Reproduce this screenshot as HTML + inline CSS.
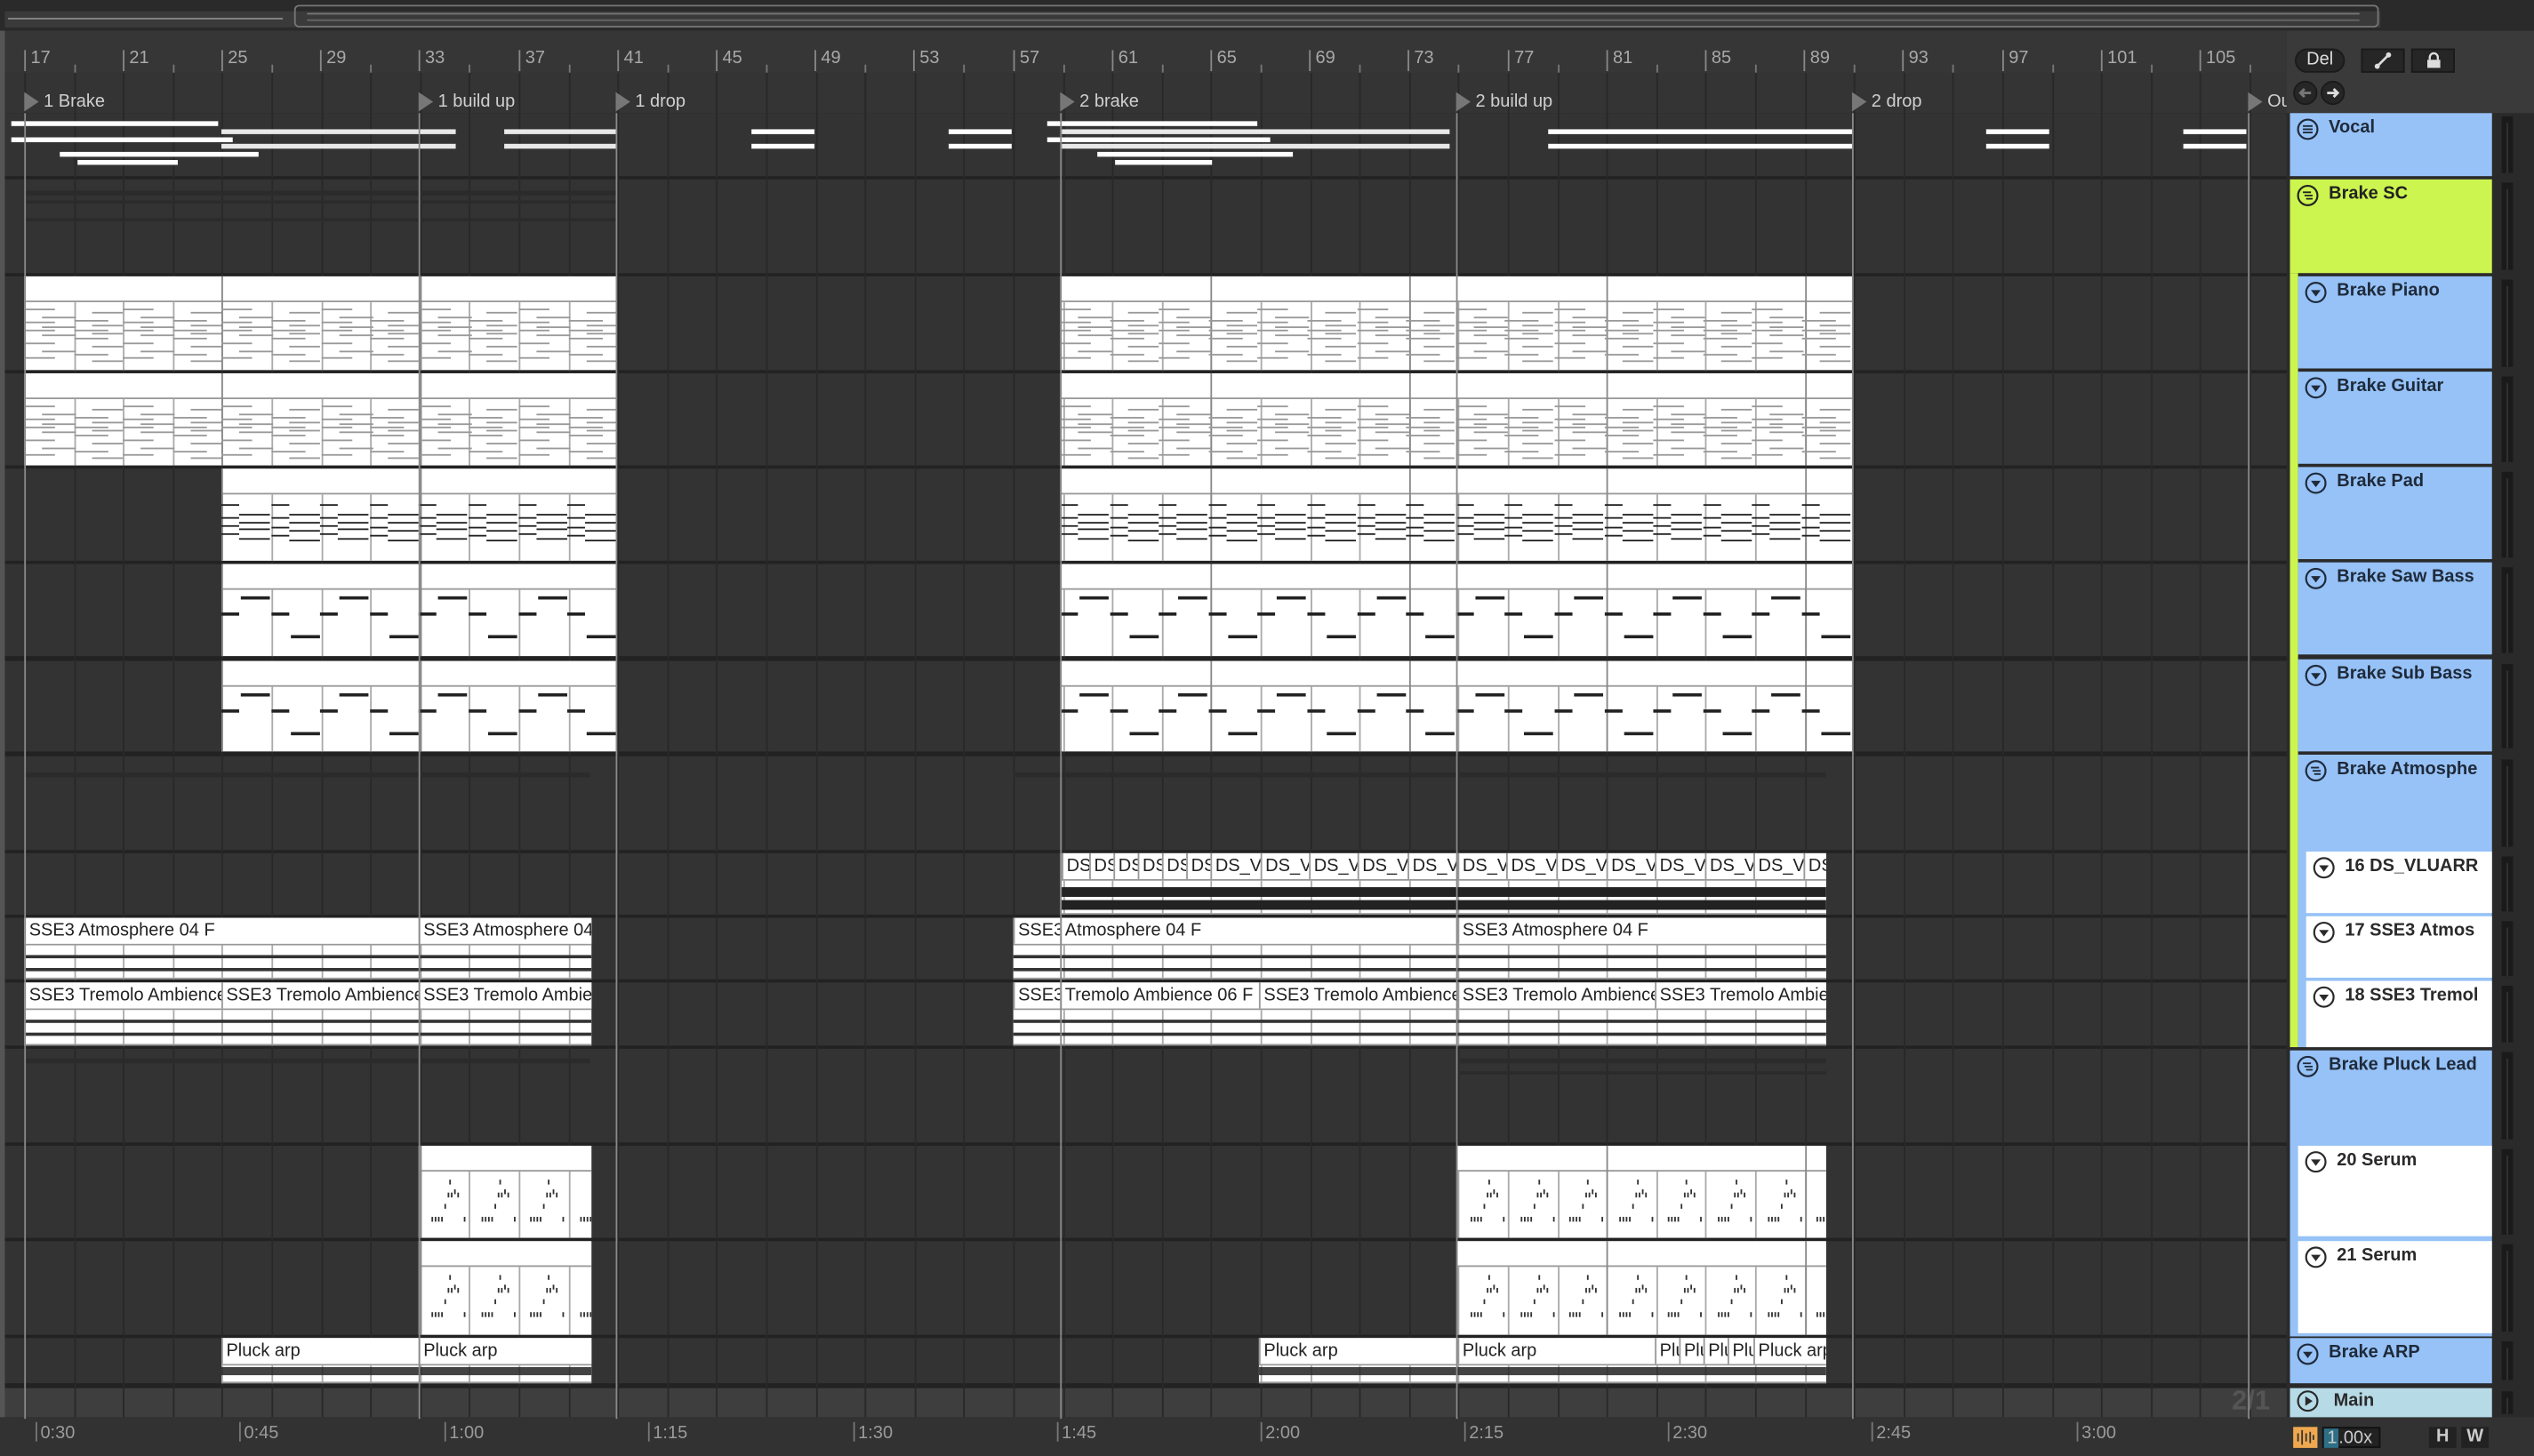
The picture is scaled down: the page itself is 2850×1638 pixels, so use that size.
<!DOCTYPE html>
<html><head><meta charset="utf-8">
<style>
html,body{margin:0;padding:0;background:#2b2b2b;overflow:hidden;width:2850px;height:1638px}
#w{position:absolute;left:0;top:0;width:1568px;height:901px;transform:scale(1.81760,1.81798);transform-origin:0 0;background:#323232;font-family:"Liberation Sans",sans-serif;overflow:hidden}
.a{position:absolute}
.rn{position:absolute;top:31px;font-size:11px;color:#a8a8a8;border-left:1px solid #888;padding-left:3px;height:13px;line-height:11px}
.loc{position:absolute;top:57px;font-size:11px;color:#cfcfcf;height:13px;line-height:13px;padding-left:12px;z-index:5}
.loc:before{content:"";position:absolute;left:0;top:0;border-left:9px solid #777;border-top:6px solid transparent;border-bottom:6px solid transparent}
.lbl{position:absolute;font-size:11px;color:#222;white-space:nowrap;overflow:hidden;line-height:16px;padding-left:2px;box-sizing:border-box;border-left:1px solid #999;background:#fff}
.hd{position:absolute;box-sizing:border-box;font-size:11px;font-weight:bold;color:#1f2a3a;white-space:nowrap;overflow:hidden}
.hd svg{position:absolute;left:4px;top:3px}
.hd span{position:absolute;left:24px;top:3px}
.tl{position:absolute;top:880px;font-size:11px;color:#9a9a9a;border-left:1px solid #777;padding-left:2px;height:12px;line-height:14px}
</style></head><body><div id="w">
<div class="a" style="left:0;top:0;width:1568px;height:19px;background:#2a2a2a"></div>
<div class="a" style="left:3px;top:7px;width:1470px;height:10px;background:#3a3a3a"></div>
<div class="a" style="left:182px;top:3px;width:1290px;height:14px;border:1px solid #777;border-radius:3px;box-sizing:border-box"></div>
<div class="a" style="left:5px;top:11px;width:170px;height:1px;background:#888"></div>
<div class="a" style="left:190px;top:8px;width:1270px;height:1px;background:#777"></div>
<div class="a" style="left:190px;top:12px;width:1270px;height:1px;background:#666"></div>
<div class="a" style="left:0;top:19px;width:1415px;height:26px;background:#363636"></div>
<div class="a" style="left:0;top:45px;width:1415px;height:25px;background:#343434"></div>
<div id="rul"></div>
<div class="rn" style="left:15px">17</div><div class="rn" style="left:76px">21</div><div class="rn" style="left:137px">25</div><div class="rn" style="left:198px">29</div><div class="rn" style="left:259px">33</div><div class="rn" style="left:321px">37</div><div class="rn" style="left:382px">41</div><div class="rn" style="left:443px">45</div><div class="rn" style="left:504px">49</div><div class="rn" style="left:565px">53</div><div class="rn" style="left:627px">57</div><div class="rn" style="left:688px">61</div><div class="rn" style="left:749px">65</div><div class="rn" style="left:810px">69</div><div class="rn" style="left:871px">73</div><div class="rn" style="left:933px">77</div><div class="rn" style="left:994px">81</div><div class="rn" style="left:1055px">85</div><div class="rn" style="left:1116px">89</div><div class="rn" style="left:1177px">93</div><div class="rn" style="left:1239px">97</div><div class="rn" style="left:1300px">101</div><div class="rn" style="left:1361px">105</div>
<div class="loc" style="left:15px">1 Brake</div>
<div class="loc" style="left:259px">1 build up</div>
<div class="loc" style="left:381px">1 drop</div>
<div class="loc" style="left:656px">2 brake</div>
<div class="loc" style="left:901px">2 build up</div>
<div class="loc" style="left:1146px">2 drop</div>
<div class="loc" style="left:1391px;width:12px;overflow:hidden">Out</div>
<div id="grid"></div>
<div id="content"></div>
<div id="labels">
<div class="lbl" style="left:657px;top:528px;width:17px">DS</div><div class="lbl" style="left:674px;top:528px;width:15px">DS</div><div class="lbl" style="left:689px;top:528px;width:15px">DS</div><div class="lbl" style="left:704px;top:528px;width:15px">DS</div><div class="lbl" style="left:719px;top:528px;width:15px">DS</div><div class="lbl" style="left:734px;top:528px;width:15px">DS</div>
<div class="lbl" style="left:749px;top:528px;width:31px">DS_V</div><div class="lbl" style="left:780px;top:528px;width:30px">DS_V</div><div class="lbl" style="left:810px;top:528px;width:30px">DS_V</div><div class="lbl" style="left:840px;top:528px;width:31px">DS_V</div><div class="lbl" style="left:871px;top:528px;width:31px">DS_V</div><div class="lbl" style="left:902px;top:528px;width:30px">DS_V</div><div class="lbl" style="left:932px;top:528px;width:31px">DS_V</div><div class="lbl" style="left:963px;top:528px;width:31px">DS_V</div><div class="lbl" style="left:994px;top:528px;width:30px">DS_V</div><div class="lbl" style="left:1024px;top:528px;width:31px">DS_V</div><div class="lbl" style="left:1055px;top:528px;width:30px">DS_V</div><div class="lbl" style="left:1085px;top:528px;width:31px">DS_V</div><div class="lbl" style="left:1116px;top:528px;width:14px">DS</div>
<div class="lbl" style="left:15px;top:568px;width:244px">SSE3 Atmosphere 04 F</div><div class="lbl" style="left:259px;top:568px;width:107px">SSE3 Atmosphere 04 F</div>
<div class="lbl" style="left:627px;top:568px;width:29px">SSE3</div><div class="lbl" style="left:656px;top:568px;width:246px">Atmosphere 04 F</div><div class="lbl" style="left:902px;top:568px;width:228px">SSE3 Atmosphere 04 F</div>
<div class="lbl" style="left:15px;top:608px;width:122px">SSE3 Tremolo Ambience 06 F</div><div class="lbl" style="left:137px;top:608px;width:122px">SSE3 Tremolo Ambience 06 F</div><div class="lbl" style="left:259px;top:608px;width:107px">SSE3 Tremolo Ambience 06 F</div>
<div class="lbl" style="left:627px;top:608px;width:29px">SSE3</div><div class="lbl" style="left:656px;top:608px;width:123px">Tremolo Ambience 06 F</div><div class="lbl" style="left:779px;top:608px;width:123px">SSE3 Tremolo Ambience 06 F</div><div class="lbl" style="left:902px;top:608px;width:122px">SSE3 Tremolo Ambience 06 F</div><div class="lbl" style="left:1024px;top:608px;width:106px">SSE3 Tremolo Ambience 06 F</div>
<div class="lbl" style="left:137px;top:828px;width:122px">Pluck arp</div><div class="lbl" style="left:259px;top:828px;width:107px">Pluck arp</div>
<div class="lbl" style="left:779px;top:828px;width:123px">Pluck arp</div><div class="lbl" style="left:902px;top:828px;width:122px">Pluck arp</div><div class="lbl" style="left:1024px;top:828px;width:15px">Pluck</div><div class="lbl" style="left:1039px;top:828px;width:15px">Pluck</div><div class="lbl" style="left:1054px;top:828px;width:15px">Pluck</div><div class="lbl" style="left:1069px;top:828px;width:16px">Pluck</div><div class="lbl" style="left:1085px;top:828px;width:45px">Pluck arp</div>
</div>
<div id="vlines"></div>
<div class="a" style="left:1415px;top:19px;width:153px;height:51px;background:#3a3a3a"></div>
<div class="a" style="left:1420px;top:30px;width:31px;height:15px;border-radius:8px;background:#262626;border:1px solid #1a1a1a;box-sizing:border-box;color:#ddd;font-size:11px;text-align:center;line-height:13px">Del</div>
<div class="a" style="left:1461px;top:30px;width:27px;height:15px;background:#262626;border:1px solid #1a1a1a;box-sizing:border-box"><svg width="25" height="13"><path d="M9 10 L16 3" stroke="#ddd" stroke-width="1.5"/><circle cx="9" cy="10" r="1.6" fill="#ddd"/><circle cx="16" cy="3" r="1.6" fill="#ddd"/></svg></div>
<div class="a" style="left:1492px;top:30px;width:27px;height:15px;background:#262626;border:1px solid #1a1a1a;box-sizing:border-box"><svg width="25" height="13"><rect x="9" y="6" width="8" height="5" fill="#ddd"/><path d="M10.5 6 V4.5 a2.5 2.5 0 0 1 5 0 V6" stroke="#ddd" stroke-width="1.3" fill="none"/></svg></div>
<div class="a" style="left:1419px;top:50px;width:15px;height:15px;border-radius:50%;background:#262626;border:1px solid #1a1a1a;box-sizing:border-box"><svg width="13" height="13"><path d="M10 6.5H3.5M6 4L3.5 6.5L6 9" stroke="#777" stroke-width="1.6" fill="none"/></svg></div>
<div class="a" style="left:1436px;top:50px;width:15px;height:15px;border-radius:50%;background:#262626;border:1px solid #1a1a1a;box-sizing:border-box"><svg width="13" height="13"><path d="M3 6.5H9.5M7 4L9.5 6.5L7 9" stroke="#ddd" stroke-width="1.6" fill="none"/></svg></div>
<div class="a" style="left:1415px;top:70px;width:153px;height:808px;background:#2a2a2a"></div>
<div class="a" style="left:0;top:877px;width:1568px;height:24px;background:#323232"></div>
<div class="tl" style="left:22px">0:30</div><div class="tl" style="left:148px">0:45</div><div class="tl" style="left:275px">1:00</div><div class="tl" style="left:401px">1:15</div><div class="tl" style="left:528px">1:30</div><div class="tl" style="left:654px">1:45</div><div class="tl" style="left:780px">2:00</div><div class="tl" style="left:906px">2:15</div><div class="tl" style="left:1032px">2:30</div><div class="tl" style="left:1158px">2:45</div><div class="tl" style="left:1285px">3:00</div>
<div class="a" style="left:1381px;top:857px;font-size:17px;color:#555;font-weight:bold">2/1</div>
<div class="a" style="left:1419px;top:883px;width:15px;height:13px;background:#f0a850"><svg width="15" height="13"><path d="M3 4v5M5.5 2v9M8 4v5M10.5 3v7M12.5 5v3" stroke="#333" stroke-width="1"/></svg></div>
<div class="a" style="left:1437px;top:883px;width:36px;height:13px;background:#222;border:1px solid #111;box-sizing:border-box;font-size:11px;color:#ccc;line-height:12px"><span style="background:#2e6f86;padding:0 1px 0 2px">1</span>.00x</div>
<div class="a" style="left:1503px;top:883px;width:17px;height:13px;background:#222;font-size:11px;color:#ccc;text-align:center;line-height:13px;font-weight:bold">H</div>
<div class="a" style="left:1523px;top:883px;width:17px;height:13px;background:#222;font-size:11px;color:#ccc;text-align:center;line-height:13px;font-weight:bold">W</div>
<div id="names">
<div class="hd" style="left:1417px;top:70px;width:125px;height:39px;background:#96c2f7"><svg width="16" height="16"><circle cx="7" cy="7" r="6" fill="none" stroke="#1f2a3a" stroke-width="1.2"/><path d="M4 5h6M4 7h6M4 9h6" stroke="#1f2a3a"/></svg><span>Vocal</span></div>
<div class="hd" style="left:1417px;top:111px;width:125px;height:58px;background:#cdf550;color:#222"><svg width="16" height="16"><circle cx="7" cy="7" r="6" fill="none" stroke="#222" stroke-width="1.2"/><path d="M4 5h5M5 7h5M6 9h4" stroke="#222"/></svg><span>Brake SC</span></div>
<div class="hd" style="left:1417px;top:169px;width:5px;height:479px;background:#cdf550"></div>
<div class="hd" style="left:1422px;top:171px;width:120px;height:57px;background:#96c2f7"><svg width="16" height="16"><circle cx="7" cy="7" r="6" fill="none" stroke="#1f2a3a" stroke-width="1.2"/><path d="M4 5.5h6L7 9.5z" fill="#1f2a3a"/></svg><span>Brake Piano</span></div>
<div class="hd" style="left:1422px;top:230px;width:120px;height:57px;background:#96c2f7"><svg width="16" height="16"><circle cx="7" cy="7" r="6" fill="none" stroke="#1f2a3a" stroke-width="1.2"/><path d="M4 5.5h6L7 9.5z" fill="#1f2a3a"/></svg><span>Brake Guitar</span></div>
<div class="hd" style="left:1422px;top:289px;width:120px;height:57px;background:#96c2f7"><svg width="16" height="16"><circle cx="7" cy="7" r="6" fill="none" stroke="#1f2a3a" stroke-width="1.2"/><path d="M4 5.5h6L7 9.5z" fill="#1f2a3a"/></svg><span>Brake Pad</span></div>
<div class="hd" style="left:1422px;top:348px;width:120px;height:57px;background:#96c2f7"><svg width="16" height="16"><circle cx="7" cy="7" r="6" fill="none" stroke="#1f2a3a" stroke-width="1.2"/><path d="M4 5.5h6L7 9.5z" fill="#1f2a3a"/></svg><span>Brake Saw Bass</span></div>
<div class="hd" style="left:1422px;top:408px;width:120px;height:57px;background:#96c2f7"><svg width="16" height="16"><circle cx="7" cy="7" r="6" fill="none" stroke="#1f2a3a" stroke-width="1.2"/><path d="M4 5.5h6L7 9.5z" fill="#1f2a3a"/></svg><span>Brake Sub Bass</span></div>
<div class="hd" style="left:1422px;top:467px;width:120px;height:181px;background:#96c2f7"><svg width="16" height="16"><circle cx="7" cy="7" r="6" fill="none" stroke="#1f2a3a" stroke-width="1.2"/><path d="M4 5h5M5 7h5M6 9h4" stroke="#1f2a3a"/></svg><span>Brake Atmosphe</span></div>
<div class="hd" style="left:1427px;top:527px;width:115px;height:38px;background:#fff;color:#2a2a2a"><svg width="16" height="16"><circle cx="7" cy="7" r="6" fill="none" stroke="#2a2a2a" stroke-width="1.2"/><path d="M4 5.5h6L7 9.5z" fill="#2a2a2a"/></svg><span>16 DS_VLUARR</span></div>
<div class="hd" style="left:1427px;top:567px;width:115px;height:38px;background:#fff;color:#2a2a2a"><svg width="16" height="16"><circle cx="7" cy="7" r="6" fill="none" stroke="#2a2a2a" stroke-width="1.2"/><path d="M4 5.5h6L7 9.5z" fill="#2a2a2a"/></svg><span>17 SSE3 Atmos</span></div>
<div class="hd" style="left:1427px;top:607px;width:115px;height:41px;background:#fff;color:#2a2a2a"><svg width="16" height="16"><circle cx="7" cy="7" r="6" fill="none" stroke="#2a2a2a" stroke-width="1.2"/><path d="M4 5.5h6L7 9.5z" fill="#2a2a2a"/></svg><span>18 SSE3 Tremol</span></div>
<div class="hd" style="left:1417px;top:650px;width:125px;height:177px;background:#96c2f7"><svg width="16" height="16"><circle cx="7" cy="7" r="6" fill="none" stroke="#1f2a3a" stroke-width="1.2"/><path d="M4 5h5M5 7h5M6 9h4" stroke="#1f2a3a"/></svg><span>Brake Pluck Lead</span></div>
<div class="hd" style="left:1422px;top:709px;width:120px;height:56px;background:#fff;color:#2a2a2a"><svg width="16" height="16"><circle cx="7" cy="7" r="6" fill="none" stroke="#2a2a2a" stroke-width="1.2"/><path d="M4 5.5h6L7 9.5z" fill="#2a2a2a"/></svg><span>20 Serum</span></div>
<div class="hd" style="left:1422px;top:768px;width:120px;height:57px;background:#fff;color:#2a2a2a"><svg width="16" height="16"><circle cx="7" cy="7" r="6" fill="none" stroke="#2a2a2a" stroke-width="1.2"/><path d="M4 5.5h6L7 9.5z" fill="#2a2a2a"/></svg><span>21 Serum</span></div>
<div class="hd" style="left:1417px;top:828px;width:125px;height:28px;background:#96c2f7"><svg width="16" height="16"><circle cx="7" cy="7" r="6" fill="none" stroke="#1f2a3a" stroke-width="1.2"/><path d="M4 5.5h6L7 9.5z" fill="#1f2a3a"/></svg><span>Brake ARP</span></div>
<div class="hd" style="left:1417px;top:859px;width:125px;height:18px;background:#b6dbe6;color:#2a2a2a"><svg width="16" height="16" style="top:1px"><circle cx="7" cy="7" r="6" fill="none" stroke="#2a2a2a" stroke-width="1.2"/><path d="M5.5 4v6l4.5-3z" fill="#2a2a2a"/></svg><span style="top:2px;left:27px">Main</span></div>
</div>
</div>
<script>
var W=document.getElementById('w');
function d(x,y,w,h,c,extra){var e=document.createElement('div');e.style.cssText='position:absolute;left:'+x+'px;top:'+y+'px;width:'+w+'px;height:'+h+'px;background:'+c+';'+(extra||'');return e;}
var G=document.getElementById('grid'),C=document.getElementById('content'),R=document.getElementById('rul'),V=document.getElementById('vlines');
function bx(b){return 15+(b-17)*15.3;}
for(var b=19;b<=107;b+=4){var x=bx(b);R.appendChild(d(x,40,1,5,'#777'));}
var rows=[[70,109],[111,169],[171,229],[231,288],[290,347],[349,406],[409,465],[468,526],[528,566],[568,606],[608,647],[649,707],[709,766],[768,826],[828,856],[859,877]];
G.appendChild(d(0,70,1415,808,'#222'));
rows.forEach(function(r,i){G.appendChild(d(0,r[0],1415,r[1]-r[0],i==15?'#3e3e3e':'#333'));});
for(var b=17;b<=107;b+=2){var x=Math.round(bx(b));G.appendChild(d(x,45,1,832,'#282828'));}
G.appendChild(d(0,19,3,860,'#555'));
[[15,118,366,3],[15,124,366,2],[15,135,366,2],[627,478,503,3],[15,478,350,3],[15,655,350,3],[902,655,228,3],[902,663,228,2]].forEach(function(a){G.appendChild(d(a[0],a[1],a[2],a[3],'#2b2b2b'));});
var vn=[[7,75,128,'#fff'],[137,80,145,'#e8e8e8'],[7,85,137,'#fff'],[137,89,145,'#e8e8e8'],[37,94,123,'#fff'],[48,99,62,'#fff'],[312,80,69,'#e8e8e8'],[312,89,69,'#e8e8e8'],[465,80,39,'#fff'],[465,89,39,'#fff'],[587,80,39,'#fff'],[587,89,39,'#fff'],
[648,75,130,'#fff'],[657,80,240,'#e8e8e8'],[648,85,138,'#fff'],[657,89,240,'#e8e8e8'],[679,94,121,'#fff'],[690,99,60,'#fff'],[958,80,188,'#fff'],[958,89,188,'#fff'],[1229,80,39,'#fff'],[1229,89,39,'#fff'],[1351,80,39,'#fff'],[1351,89,39,'#fff']];
vn.forEach(function(a){C.appendChild(d(a[0],a[1],a[2],3,a[3]));});
function midi(x1,x2,r,type){var y=r[0],h=r[1]-r[0];var cl=d(x1,y,x2-x1,h,'#fff','overflow:hidden');C.appendChild(cl);
 cl.appendChild(d(0,15,x2-x1,1,'#999'));
 for(var b=17;b<=107;b+=2){var gx=bx(b)-x1;if(gx>0&&gx<x2-x1)cl.appendChild(d(gx,16,1,h-16,'#aaa'));}
 for(var b=17;b<=107;b+=8){var gx=bx(b)-x1;if(gx>0&&gx<x2-x1)cl.appendChild(d(gx,0,1,h,'#888'));}
 var n=Math.ceil((x2-x1)/30.6);
 for(var i=0;i<n;i++){var bx0=i*30.6;
  if(type=='p'){var ys=[20,25,28,31,33,36,41,46,50];ys.forEach(function(yy,k){var o=((i+k)%2)*11;cl.appendChild(d(bx0+o,yy+(i%2)*2,19+(k%2)*2,1,'#999'));});}
  if(type=='pad'){[22,28,30,33,35,37,40,43].forEach(function(yy,k){var o=(k%2)*11;cl.appendChild(d(bx0+o,yy+((i%2)&&k>3?1:0),(k%2)?19:11,1,'#222'));});}
  if(type=='b'){cl.appendChild(d(bx0,30,11,2,'#222'));cl.appendChild(d(bx0+12,i%2==0?20:44,18,2,'#222'));}
  if(type=='arp'){var pts=[[8,44],[10,44],[12,44],[14,44],[16,36],[18,29],[19,21],[20,29],[22,27],[24,29],[28,44]];pts.forEach(function(p){cl.appendChild(d(bx0+p[0],p[1],1,3,'#333'));});}
 }}
function row(i){return rows[i];}
midi(15,381,row(2),'p');midi(656,1146,row(2),'p');
midi(15,381,row(3),'p');midi(656,1146,row(3),'p');
midi(137,381,row(4),'pad');midi(656,1146,row(4),'pad');
midi(137,381,row(5),'b');midi(656,1146,row(5),'b');
midi(137,381,row(6),'b');midi(656,1146,row(6),'b');
midi(259,366,row(12),'arp');midi(902,1130,row(12),'arp');
midi(259,366,row(13),'arp');midi(902,1130,row(13),'arp');
function audio(x1,x2,r,type){var y=r[0],h=r[1]-r[0];var cl=d(x1,y,x2-x1,h,'#fff','overflow:hidden');C.appendChild(cl);
 cl.appendChild(d(0,16,x2-x1,1,'#999'));
 for(var b=17;b<=107;b+=2){var gx=bx(b)-x1;if(gx>0&&gx<x2-x1)cl.appendChild(d(gx,17,1,h-17,'#aaa'));}
 if(type=='ds'){cl.appendChild(d(0,21,x2-x1,6,'#222'));cl.appendChild(d(0,29,x2-x1,6,'#222'));}
 else if(type=='arp'){cl.appendChild(d(0,18,x2-x1,5,'#222','opacity:.85'));}
 else{cl.appendChild(d(0,23,x2-x1,1.5,'#333'));cl.appendChild(d(0,31,x2-x1,1.5,'#333'));}
 cl.appendChild(d(0,h-1,x2-x1,1,'#999'));}
audio(656,1130,row(8),'ds');
audio(15,366,row(9),'a');audio(627,1130,row(9),'a');
audio(15,366,row(10),'a');audio(627,1130,row(10),'a');
audio(137,366,row(14),'arp');audio(779,1130,row(14),'arp');
W.appendChild(document.getElementById('labels'));
[15,259,381,656,901,1146,1391].forEach(function(x){V.appendChild(d(x,70,1,808,'#8a8a8a'));});
W.appendChild(V);
rows.forEach(function(r){W.appendChild(d(1548,r[0]+2,7,r[1]-r[0]-4,'#1a1a1a'));W.appendChild(d(1551,r[0]+6,1,r[1]-r[0]-8,'#333'));});
W.appendChild(document.getElementById('names'));
</script>
</body></html>
